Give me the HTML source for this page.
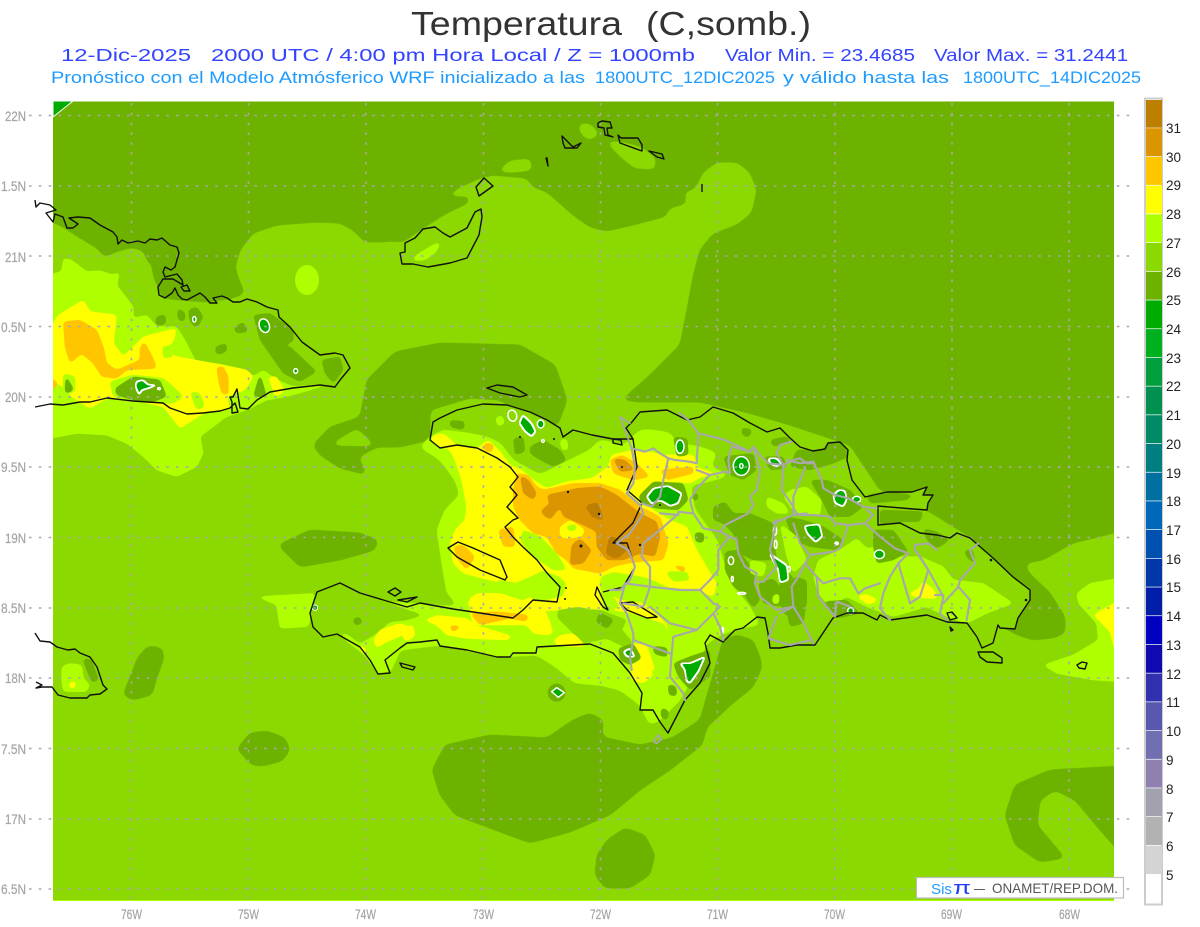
<!DOCTYPE html>
<html><head><meta charset="utf-8"><title>Temperatura</title>
<style>
html,body{margin:0;padding:0;background:#fff;width:1200px;height:927px;overflow:hidden}
svg{display:block}
text{font-family:"Liberation Sans",sans-serif;white-space:pre}
.c26{fill:#6eb200;stroke:#6eb200}.c27{fill:#8bd900;stroke:#8bd900}.c28{fill:#afff00;stroke:#afff00}
.y{fill:#ffff00;stroke:#ffff00}.o{fill:#ffc600;stroke:#ffc600}.b{fill:#db9500;stroke:#db9500}.d{fill:#bd7f00;stroke:#bd7f00}
.c26,.c27,.c28{filter:url(#s1)}
.z polygon{filter:url(#s3)}
.g{fill:#00ab00;stroke:#fff;stroke-width:4.5;stroke-linejoin:round}
.z polygon.g{filter:url(#gs)}
.w{fill:none;stroke:#fff;stroke-width:4.5}
.coast{fill:none;stroke:#111;stroke-width:1.4;stroke-linejoin:round}
.bd{fill:none;stroke:#a8a8a8;stroke-width:6.5;stroke-linejoin:round;stroke-linecap:round}
.gl{font-size:14px;fill:#a6a6a6;stroke:#a6a6a6;stroke-width:.25}
.cl{font-size:13.5px;fill:#222}
</style></head><body>
<svg width="1200" height="927" viewBox="0 0 1200 927" xmlns="http://www.w3.org/2000/svg">
<defs>
<clipPath id="m"><rect x="53" y="101.5" width="1061" height="799.5"/></clipPath>
<filter id="s1" x="-50%" y="-50%" width="200%" height="200%" color-interpolation-filters="sRGB">
<feGaussianBlur stdDeviation="3.5"/>
<feComponentTransfer><feFuncA type="linear" slope="10" intercept="-4.5"/></feComponentTransfer>
</filter>
<filter id="s3" x="-50%" y="-50%" width="200%" height="200%" color-interpolation-filters="sRGB">
<feGaussianBlur stdDeviation="6"/>
<feComponentTransfer><feFuncA type="linear" slope="10" intercept="-4.2"/></feComponentTransfer>
</filter>
<filter id="gs" x="-50%" y="-50%" width="200%" height="200%" color-interpolation-filters="sRGB">
<feGaussianBlur in="SourceAlpha" stdDeviation="5"/>
<feComponentTransfer result="outer"><feFuncA type="linear" slope="12" intercept="-5"/></feComponentTransfer>
<feFlood flood-color="#fff"/><feComposite in2="outer" operator="in" result="wh"/>
<feMorphology in="outer" operator="erode" radius="4.5" result="inner"/>
<feFlood flood-color="#00ab00"/><feComposite in2="inner" operator="in" result="gr"/>
<feMerge><feMergeNode in="wh"/><feMergeNode in="gr"/></feMerge>
</filter>
</defs>
<rect width="1200" height="927" fill="#fff"/>
<g font-size="33" fill="#333">
<text x="411" y="35" textLength="211" lengthAdjust="spacingAndGlyphs">Temperatura</text>
<text x="646" y="35" textLength="165" lengthAdjust="spacingAndGlyphs">(C,somb.)</text>
</g>
<g font-size="17.5" fill="#3344ff">
<text x="61" y="61" textLength="130" lengthAdjust="spacingAndGlyphs">12-Dic-2025</text>
<text x="211" y="61" textLength="484" lengthAdjust="spacingAndGlyphs">2000 UTC / 4:00 pm Hora Local / Z = 1000mb</text>
<text x="725" y="61" textLength="190" lengthAdjust="spacingAndGlyphs">Valor Min. = 23.4685</text>
<text x="934" y="61" textLength="194" lengthAdjust="spacingAndGlyphs">Valor Max. = 31.2441</text>
</g>
<g font-size="16.5" fill="#1e9bff">
<text x="51" y="83" textLength="534" lengthAdjust="spacingAndGlyphs">Pronóstico con el Modelo Atmósferico WRF inicializado a las</text>
<text x="595" y="83" textLength="180" lengthAdjust="spacingAndGlyphs">1800UTC_12DIC2025</text>
<text x="783" y="83" textLength="166" lengthAdjust="spacingAndGlyphs">y válido hasta las</text>
<text x="963" y="83" textLength="178" lengthAdjust="spacingAndGlyphs">1800UTC_14DIC2025</text>
</g>

<g clip-path="url(#m)">
<rect x="53" y="101" width="1061" height="800" fill="#8bd900"/>
<rect x="53" y="900" width="1061" height="1" fill="#afff00"/>
<!-- dark upper sea -->
<polygon class="c26" points="30,80 1140,80 1140,525 1114,533 1073,543 1043,560 1025,563 1028,572 1050,593 1065,617 1065,633 1053,638 1033,640 1015,634 1000,625 975,540 930,512 880,490 850,445 790,425 745,412 700,402 640,402 622,400 650,375 680,345 687,310 693,277 700,250 713,234 737,225 752,213 757,190 750,172 737,162 717,162 703,172 695,188 683,193 687,203 667,209 667,216 633,225 607,231 590,227 573,215 547,192 533,187 527,178 493,175 480,178 460,187 444,197 470,197 468,203 447,213 423,228 403,242 393,241 380,242 365,242 353,230 340,223 317,222 277,225 253,233 240,250 235,267 240,283 245,293 233,298 207,302 180,300 163,298 158,287 153,275 152,263 147,262 145,252 133,247 115,252 105,257 97,248 80,238 63,227 53,222 30,215"/>
<polygon class="c27" points="578,124 590,124 599,134 590,140 582,135"/>
<polygon class="c27" points="606,141 625,143 642,148 655,158 655,169 635,168 620,156"/>
<polygon class="c27" points="498,172 510,161 530,159 532,170 515,172"/>
<!-- dark blobs -->
<polygon class="c26" points="313,445 330,427 360,417 367,380 395,352 440,343 520,345 555,365 567,400 558,425 530,420 500,400 470,398 430,410 430,440 400,447 377,447 358,457 367,475 340,468 320,455"/>
<polygon class="c27" points="330,445 357,429 375,446"/>
<polygon class="c26" points="148,646 162,648 164,658 157,677 152,695 133,700 123,695 130,677 138,657"/>
<polygon class="c26" points="237,749 250,733 267,731 285,738 290,750 282,761 263,766 252,765"/>
<polygon class="c26" points="432,770 445,745 490,735 547,738 573,720 590,713 603,720 602,737 640,745 672,738 700,720 723,640 737,635 753,640 760,657 762,667 753,687 733,703 707,727 702,745 670,770 640,790 610,815 570,832 530,843 495,830 455,815 440,795"/>
<polygon class="c26" points="597,855 607,840 625,828 645,835 655,855 650,875 630,888 605,888 595,875"/>
<polygon class="c26" points="1005,815 1015,785 1050,770 1140,765 1140,875 1100,830 1075,800 1055,790 1040,800 1037,825 1065,858 1040,862 1015,845"/>
<polygon class="c26" points="278,545 310,530 360,533 378,540 375,550 340,560 300,567"/>
<!-- bright patches sea -->
<ellipse cx="307" cy="280" rx="12" ry="15" fill="#afff00"/>
<polygon class="c28" points="410,259 425,250 443,239 436,252 425,260 414,261"/>
<g class="z" transform="translate(0,200) scale(.33333)" stroke-width="1">
<polygon class="c28" points="100,235 185,215 190,175 215,180 260,215 300,212 340,225 360,215 350,255 400,320 400,355 440,345 470,380 530,380 560,430 590,490 650,490 740,510 760,530 790,510 830,540 880,560 1000,550 860,590 800,600 740,630 680,650 600,710 610,760 590,800 530,830 470,810 430,770 380,730 320,705 230,700 100,725"/>
<polygon class="y" points="175,345 250,300 270,335 350,345 340,430 370,470 430,410 530,385 520,425 490,450 530,470 640,490 740,510 760,530 735,570 680,590 690,625 640,635 610,640 540,685 490,620 400,600 320,595 270,625 215,590 190,560 130,530 130,500 130,420"/>
<polygon class="c28" points="487,440 520,435 520,470 490,475"/>
<polygon class="c28" points="760,530 800,520 830,570 770,590"/>
<polygon class="c28" points="570,575 600,580 615,620 590,630"/>
<polygon class="c28" points="330,545 400,525 490,535 520,560 550,590 520,610 400,605 340,590"/>
<polygon class="c28" points="190,520 225,530 225,575 190,585"/>
<polygon class="o" points="190,365 240,360 290,390 310,440 320,490 350,510 420,480 420,445 432,423 460,475 470,505 380,510 350,535 305,530 280,490 245,460 210,490 195,440"/>
<polygon class="o" points="650,500 670,500 685,530 685,585 665,580 655,540"/>
<polygon class="o" points="120,540 170,540 170,565 120,565"/>
<polygon class="y" points="805,530 830,530 855,575 825,590"/>
<polygon class="c26" points="345,565 400,530 480,540 500,590 460,605 400,600 350,585"/>
<polygon class="c26" points="197,525 222,570 195,582"/>
<polygon class="c26" points="468,350 497,343 497,372 468,377"/>
<polygon class="c26" points="533,323 557,340 552,367 533,357"/>
<polygon class="c26" points="565,330 590,320 610,350 590,385 570,365"/>
<polygon class="c26" points="645,440 680,430 680,455 650,465"/>
<polygon class="c26" points="700,385 730,365 745,395 710,400"/>
<polygon class="c26" points="760,345 810,340 880,390 880,425 830,440 870,440 950,515 900,545 850,520 815,470 780,420"/>
<polygon class="c26" points="965,480 1020,470 1030,510 1000,550 975,520"/>
<polygon class="c26" points="760,590 780,520 800,590"/>
<polygon class="g" points="408,545 430,540 445,555 470,555 445,565 425,570 418,585 408,565"/>
<ellipse class="g" cx="793" cy="377" rx="15" ry="21" transform="rotate(-20 793 377)"/>
<ellipse class="w" cx="477" cy="566" rx="4" ry="3"/>
<ellipse class="g" cx="583" cy="358" rx="5" ry="8"/>
<ellipse class="g" cx="887" cy="513" rx="6" ry="7"/>
</g>
<!-- right sea -->
<g class="z" transform="translate(940,500) scale(.33333)" stroke-width="1">
<polygon class="c28" points="620,220 450,250 410,280 415,310 470,370 475,420 400,465 310,495 350,520 460,540 620,550"/>
<polygon class="y" points="620,290 530,305 460,345 510,395 530,470 620,480"/>
</g>
<!-- Jamaica -->
<g class="z" transform="translate(0,600) scale(.33333)" stroke-width="1">
<polygon class="c28" points="185,200 210,190 245,195 250,235 270,255 260,275 190,275 185,240"/>
<polygon class="y" points="203,250 232,243 218,272"/>
<polygon class="c26" points="248,178 272,176 297,240 275,247"/>
<polygon class="c28" points="770,-10 830,15 840,85 925,80 945,-20"/>
</g>
<!-- Hispaniola land -->
<polygon fill="#8bd900" points="433,422 440,418 457,410 483,404 507,405 530,412 547,420 560,428 563,437 573,430 592,435 613,439 626,428 632,422 640,412 667,410 687,420 700,417 713,407 733,413 750,423 767,432 780,428 790,438 800,447 813,451 825,449 828,443 840,442 848,450 847,460 852,480 865,497 887,492 912,492 927,487 923,495 933,495 928,503 927,510 913,509 878,506 878,525 900,523 920,533 937,535 950,538 957,533 970,538 993,558 1013,577 1030,590 1030,600 1018,618 1015,629 1000,628 998,625 993,643 982,648 977,637 967,623 947,622 927,615 890,620 880,615 877,620 863,613 847,613 833,618 815,645 797,645 780,648 770,648 768,633 765,618 757,617 743,628 735,630 723,642 710,635 705,643 710,663 700,683 685,700 668,733 660,722 653,710 640,710 642,693 630,673 613,653 590,644 537,647 536,653 513,653 510,657 497,657 467,650 440,646 437,640 420,642 407,643 400,648 385,660 390,673 378,674 370,660 360,647 337,634 323,637 313,627 310,613 317,592 340,583 360,593 390,602 407,607 420,603 453,609 480,613 513,618 523,610 533,600 557,602 560,587 547,573 537,560 523,547 513,537 505,527 513,520 518,518 507,507 517,495 510,487 518,477 510,467 497,458 477,448 457,445 440,448 430,440"/>
<!-- big c28 -->
<polygon class="c28" points="420,447 430,437 443,430 467,433 487,437 500,443 513,460 540,475 570,460 590,450 600,440 625,445 640,430 653,430 670,433 677,443 700,447 717,453 710,467 730,475 707,482 690,485 695,510 717,540 723,560 733,587 750,607 760,625 740,628 720,635 705,645 700,665 680,700 660,720 650,725 640,705 620,690 600,685 575,683 557,668 537,655 497,657 440,645 400,650 390,673 378,674 365,655 345,640 340,625 355,610 365,595 390,602 420,604 460,607 447,593 443,570 440,550 437,530 445,510 460,495 455,480 440,460"/>
<!-- peninsula patches -->
<g class="z" transform="translate(280,550) scale(.33333)" stroke-width="1">
<polygon class="c27" points="110,130 180,110 250,135 330,160 380,180 430,195 380,210 330,215 290,250 240,280 200,250 140,260 105,230 95,190"/>
<polygon class="c26" points="218,206 242,201 247,220 225,227"/>
<polygon class="c27" points="840,170 900,170 950,190 1010,220 1060,280 1030,290 980,265 910,280 870,240 830,200"/>
<polygon class="c26" points="943,193 972,203 977,227 950,222"/>
<polygon class="y" points="280,270 300,240 360,220 400,235 380,250 310,280 290,295"/>
<polygon class="y" points="430,210 480,195 500,220 580,225 620,235 700,260 680,270 560,265 500,255 470,225"/>
<polygon class="y" points="570,140 640,130 700,170 750,140 800,190 820,250 800,255 760,250 740,225 640,225 580,225 570,190"/>
<polygon class="y" points="820,270 860,250 900,285 830,285"/>
<polygon class="y" points="240,280 260,300 255,320 240,295"/>
</g>
<g transform="translate(280,550) scale(.33333)">
<circle cx="830" cy="428" r="27" fill="#6eb200"/>
<polygon class="g" points="815,425 830,413 853,428 835,442"/>
<circle cx="105" cy="173" r="8" fill="#00ab00" stroke="#fff" stroke-width="3"/>
</g>
<!-- Haiti yellow etc -->
<g class="z" transform="translate(400,380) scale(.33333)" stroke-width="1">
<polygon class="c26" points="390,200 430,180 480,210 500,240 460,260 420,240 390,220"/>
<polygon class="c26" points="150,120 195,125 190,150 150,140"/>
<polygon class="c26" points="340,175 370,170 375,215 345,225"/>
<polygon class="c28" points="285,115 305,105 315,130 295,140"/>
<polygon class="c28" points="480,180 500,175 505,210 485,210"/>
<polygon class="y" points="105,165 90,175 110,195 150,210 165,240 185,300 200,380 195,420 165,450 150,490 160,550 190,580 250,595 330,615 400,585 430,570 480,590 500,610 490,650 420,665 360,660 300,640 230,640 200,670 235,705 290,720 380,700 470,690 530,680 610,690 600,620 600,590 640,575 730,590 760,600 800,620 890,630 940,650 950,610 925,570 890,510 860,440 810,420 735,375 730,345 770,310 830,305 870,310 905,290 950,280 895,265 880,225 790,225 745,215 700,210 635,225 625,260 575,295 500,305 440,325 400,300 365,270 330,255 300,215 265,180 230,205 170,195 130,160"/>
<polygon class="y" points="620,640 660,660 730,670 800,730 820,790 790,730 700,700 640,690"/>
<polygon class="y" points="465,770 520,760 560,800 500,800"/>
<polygon class="y" points="690,790 740,795 765,870 720,890 700,840"/>
<polygon class="y" points="100,705 200,715 240,745 180,770 110,740"/>
<polygon class="y" points="0,745 40,735 45,770 15,785"/>
<polygon class="c28" points="370,450 420,470 470,520 500,570 460,570 400,530 360,480"/>
<polygon class="c28" points="290,600 360,610 330,625 290,620"/>
<polygon class="c28" points="795,575 860,575 870,600 820,605"/>
<polygon class="c27" points="520,690 600,690 680,720 660,760 590,760 530,740"/>
<polygon class="c26" points="598,698 642,718 622,747 588,725"/>
<polygon class="c28" points="595,640 625,630 660,680 630,690"/>
<polygon class="o" points="350,280 385,285 410,320 430,330 520,310 600,310 660,330 720,380 780,410 805,490 790,540 720,545 680,550 640,560 600,580 520,565 500,540 470,520 440,470 400,460 360,420 340,380 340,330"/>
<polygon class="o" points="295,450 340,440 345,500 310,500"/>
<polygon class="o" points="630,240 665,225 710,250 750,290 700,300 640,280"/>
<polygon class="o" points="780,270 880,260 880,280 800,300"/>
<polygon class="o" points="160,500 190,495 225,530 200,570 175,540"/>
<polygon class="o" points="210,700 290,695 385,705 380,725 330,715 240,735"/>
<polygon class="o" points="253,188 282,193 277,217 253,212"/>
<polygon class="o" points="810,552 860,562 850,578"/>
<polygon class="o" points="145,738 187,736 160,757"/>
<polygon class="b" points="440,345 490,335 530,325 600,320 650,345 720,400 770,425 780,470 765,530 720,520 670,540 620,540 590,500 590,455 540,430 490,410 480,380 450,420 420,395 450,370"/>
<polygon class="b" points="360,285 385,300 410,340 400,360 370,340"/>
<polygon class="b" points="515,495 540,475 575,510 550,550 510,555"/>
<polygon class="b" points="640,235 675,240 705,270 660,275"/>
<polygon class="d" points="555,378 592,366 612,422 578,412"/>
<polygon class="d" points="628,468 662,478 682,510 650,537 618,522"/>
<polygon class="d" points="528,488 552,493 545,507"/>
<polygon class="y" points="480,440 510,420 555,450 545,470 500,475 480,470"/>
<polygon class="c28" points="498,438 532,433 527,452 503,452"/>
<!-- N Haiti greens -->
<ellipse class="w" cx="337" cy="107" rx="13" ry="17" transform="rotate(-15 337 107)" style="fill:#8bd900"/>
<polygon class="g" points="368,105 380,115 395,130 407,155 395,170 375,155 358,130"/>
<ellipse class="g" cx="422" cy="132" rx="10" ry="12"/>
<ellipse class="w" cx="429" cy="183" rx="4" ry="4"/>
</g>
<!-- DR interior (zoom 7) -->
<g class="z" transform="translate(780,400) scale(.33333)" stroke-width="1">
<polygon class="c28" points="115,480 180,450 230,415 260,445 300,440 350,470 420,470 490,500 520,540 610,550 700,610 620,640 560,670 500,650 440,620 340,650 260,620 200,590 150,620 115,580 100,530"/>
<polygon class="c28" points="30,270 80,260 125,300 120,345 50,345 10,290"/>
<polygon class="y" points="228,588 260,583 297,600 265,614"/>
<polygon class="y" points="383,580 415,568 430,543 467,575 472,597 410,592"/>
<polygon class="c26" points="90,240 140,240 210,270 250,320 210,350 150,350 120,290"/>
<polygon class="c26" points="15,350 70,360 130,380 190,420 170,450 90,440 40,420"/>
<polygon class="c26" points="280,390 340,390 385,455 340,480 290,490 280,440"/>
<polygon class="c26" points="260,285 320,275 400,285 380,300 270,310"/>
<polygon class="c26" points="300,330 430,335 420,365 370,365 300,375"/>
<polygon class="c26" points="430,385 470,395 510,420 470,445 440,420"/>
<polygon class="c26" points="551,453 577,448 587,492 565,477"/>
<polygon class="c26" points="0,530 30,520 80,600 70,670 10,640 0,600"/>
<polygon class="c26" points="130,605 200,600 240,640 170,655"/>
<polygon class="c26" points="50,150 130,150 145,125 190,130 205,170 160,190 90,210 30,200"/>
<polygon class="g" points="160,285 175,270 195,272 200,300 190,320 165,310"/>
<ellipse class="g" cx="230" cy="298" rx="12" ry="9"/>
<polygon class="g" points="73,378 118,373 127,410 107,427 82,402"/>
<ellipse class="w" cx="170" cy="430" rx="5" ry="4" style="fill:#fff"/>
<ellipse class="g" cx="298" cy="463" rx="15" ry="13"/>
<circle class="g" cx="212" cy="632" r="9"/>
</g>
<!-- DR interior (zoom 11) -->
<g class="z" transform="translate(610,400) scale(.33333)" stroke-width="1">
<polygon class="c26" points="345,455 385,450 430,510 435,550 450,600 430,625 400,580 370,560 345,510"/>
<polygon class="c26" points="310,320 345,305 370,340 420,340 490,370 490,410 500,480 430,480 390,460 370,400 340,370 310,360"/>
<polygon class="c26" points="550,530 590,540 590,620 550,610"/>
<polygon class="c26" points="530,630 580,635 580,670 540,680"/>
<polygon class="c26" points="445,550 490,535 540,600 510,620 460,610"/>
<polygon class="c28" points="470,290 520,310 540,340 500,340 470,320"/>
<polygon class="c28" points="510,370 560,410 590,480 550,520 530,470"/>
<polygon class="c28" points="420,480 470,490 460,530 420,520"/>
<polygon class="c28" points="488,588 507,578 507,612 488,612"/>
<polygon class="c26" points="393,83 427,88 417,112 398,107"/>
<polygon class="c26" points="480,120 530,110 545,125 490,140"/>
<polygon class="c26" points="248,278 267,283 262,302 248,302"/>
<polygon class="c26" points="253,398 282,398 282,427 258,427"/>
<polygon class="c26" points="190,110 232,115 235,165 200,170"/>
<polygon class="c26" points="340,170 430,160 440,210 400,240 360,225"/>
<polygon class="c26" points="460,170 520,170 530,205 480,210"/>
<polygon class="c26" points="85,290 130,245 220,250 235,300 205,330 140,325 100,315"/>
<polygon class="c26" points="25,745 70,730 95,775 60,795 30,780"/>
<polygon class="c26" points="190,790 240,770 300,750 300,830 240,870 205,830"/>
<polygon class="c26" points="128,738 172,743 172,772 133,762"/>
<polygon class="c26" points="173,853 197,858 202,887 178,887"/>
<polygon class="c26" points="153,923 177,933 172,962 153,952"/>
<polygon class="y" points="60,790 115,795 130,825 100,850 65,840"/>
<ellipse class="g" cx="210" cy="140" rx="12" ry="20"/>
<polygon class="g" points="110,290 130,265 175,258 215,280 205,310 180,318 150,300 125,312"/>
<ellipse class="g" cx="394" cy="198" rx="24" ry="28"/>
<ellipse class="w" cx="394" cy="198" rx="5" ry="7"/>
<polygon class="g" points="475,175 500,175 515,190 500,200 480,190"/>
<polygon class="g" points="478,460 530,495 535,540 510,548 505,510"/>
<ellipse class="w" cx="537" cy="507" rx="4" ry="8"/>
<ellipse class="w" cx="363" cy="482" rx="8" ry="12"/>
<ellipse class="w" cx="367" cy="537" rx="3" ry="8"/>
<ellipse class="w" cx="395" cy="580" rx="12" ry="3"/>
<ellipse class="w" cx="495" cy="393" rx="5" ry="12"/>
<ellipse class="w" cx="497" cy="433" rx="4" ry="12"/>
<ellipse class="w" cx="338" cy="690" rx="2" ry="8"/>
<polygon class="g" points="210,790 240,790 285,770 265,815 240,850 230,845 225,810"/>
<polygon class="g" points="40,755 60,745 75,770 50,770"/>
</g>
<polygon points="53,101 73,101 53,117" fill="#00ab00" stroke="#fff" stroke-width="1"/>
</g>

<!-- grid -->
<g fill="none" stroke="#a8a8a8" stroke-width="1.6" stroke-dasharray="2.6 7.2">
<path d="M29 115.5H1134M29 186H1134M29 256H1134M29 326.5H1134M29 397H1134M29 467H1134M29 537.5H1134M29 608H1134M29 678H1134M29 748.5H1134M29 819H1134M29 889H1134"/>
<path d="M131.5 103V905M248.5 103V905M366 103V905M483.5 103V905M600.5 103V905M717.5 103V905M835 103V905M952 103V905M1069 103V905"/>
</g>

<!-- coast -->
<g class="coast">
<polyline points="35,200 36,207 40,203 50,205 56,210 46,213 53,222 55,214 63,217 67,228 73,228 78,224 69,218 78,217 90,218 100,225 113,232 117,237 118,244 122,240 128,243 138,241 145,243 150,239 157,240 162,238 170,245 177,247 179,253 175,267 171,270 165,267 163,272 165,277 177,274 182,280 183,285 173,279 163,279 158,287 159,295 165,298 172,293 175,288 178,295 182,299 187,300 200,293 205,297 210,303 217,303 213,298 222,296 227,298 233,302 240,302 247,299 257,302 267,307 278,310 279,317 290,327 302,342 320,355 335,353 343,355 350,368 340,380 335,387 320,385 293,388 270,392 257,400 248,409 240,408 237,389 233,397 230,397 232,402 232,413 238,412 235,403 230,408 220,411 203,413 187,414 170,408 163,403 133,401 107,398 90,402 80,402 63,405 50,404 35,407"/>
<polygon points="181,287 187,285 190,291 184,291"/>
<polygon points="402,264 400,253 405,252 405,243 415,238 423,229 435,227 443,233 450,237 467,228 470,222 475,212 481,209 482,217 479,235 467,258 450,263 428,267 413,264"/>
<polygon points="476,187 484,178 493,186 479,196"/>
<polygon points="547,158 548,166 546,158"/>
<polygon points="562,136 573,147 581,143 577,148 565,148 563,143"/>
<polygon points="598,123 602,121 610,122 612,128 607,128 608,135 613,137 605,135 604,128 598,127"/>
<polygon points="618,135 621,138 638,138 642,145 642,151 620,143"/>
<polygon points="649,151 662,154 664,159 657,157"/>
<polyline points="702,184 702,192"/>
<polygon points="487,388 497,385 513,387 527,395 520,397 500,393"/>
<polygon points="433,422 440,418 457,410 483,404 507,405 530,412 547,420 560,428 563,437 573,430 592,435 613,439 633,439 626,428 632,422 640,412 667,410 687,420 700,417 713,407 733,413 750,423 767,432 780,428 790,438 800,447 813,451 825,449 828,443 840,442 848,450 847,460 852,480 865,497 887,492 912,492 927,487 923,495 933,495 928,503 927,510 913,509 878,506 878,525 900,523 920,533 937,535 950,538 957,533 970,538 993,558 1013,577 1030,590 1030,600 1018,618 1015,629 1000,628 998,625 993,643 982,648 977,637 967,623 947,622 927,615 890,620 880,615 877,620 863,613 847,613 833,618 815,645 797,645 780,648 770,648 768,633 765,618 757,617 743,628 735,630 723,642 710,635 705,643 710,663 700,683 685,700 668,733 660,722 653,710 640,710 642,693 630,673 613,653 590,644 537,647 536,653 513,653 510,657 497,657 467,650 440,646 437,640 420,642 407,643 400,648 385,660 390,673 378,674 370,660 360,647 337,634 323,637 313,627 310,613 317,592 340,583 360,593 390,602 407,607 420,603 453,609 480,613 513,618 523,610 533,600 557,602 560,587 547,573 537,560 523,547 513,537 505,527 513,520 518,518 507,507 517,495 510,487 518,477 510,467 497,458 477,448 457,445 440,448 430,440"/>
<polyline points="633,439 637,467 627,490 642,503 633,523 613,543 627,543 635,567 623,587 603,592"/>
<polygon points="613,443 622,445 621,440 613,439"/>
<polygon points="448,548 458,542 473,548 500,560 507,577 505,580 480,570 457,557"/>
<polygon points="597,587 608,610 603,607 595,595"/>
<polygon points="620,603 633,602 657,617 647,618 627,610"/>
<polygon points="978,652 993,652 1002,658 1002,663 987,662 980,657"/>
<polygon points="947,613 952,612 957,618 950,620"/>
<polygon points="950,627 953,630 951,631"/>
<polygon points="1077,665 1082,662 1087,663 1085,669 1079,668"/>
<polygon points="400,663 415,667 413,670 402,667"/>
<polygon points="388,592 395,588 401,592 395,596"/>
<polygon points="398,600 417,597 407,602"/>
<polyline points="35,633 40,641 50,642 57,647 68,650 75,649 80,653 90,657 97,667 103,685 107,689 100,694 90,695 87,698 70,698 58,695 52,687 42,687 36,688 42,685 36,682"/>
</g>
<g fill="#111">
<circle cx="568" cy="492" r="1.2"/><circle cx="599" cy="514" r="1.2"/><circle cx="581" cy="546" r="1.5"/><circle cx="640" cy="545" r="1.2"/><circle cx="622" cy="467" r="1"/><circle cx="660" cy="505" r="1"/><circle cx="991" cy="560" r="1.3"/><circle cx="1026" cy="600" r="1.3"/><circle cx="565" cy="599" r="1"/><circle cx="566" cy="588" r="1"/><circle cx="520" cy="437" r="1"/><circle cx="554" cy="439" r="1"/>
</g>

<!-- provincial borders -->
<g class="bd" transform="translate(610,400) scale(.33333)">
<polyline points="65,145 105,155 130,145 150,160 175,175 195,180 240,185 260,190 265,100 240,65 210,40"/>
<polyline points="175,175 160,240 150,290 125,320 95,310"/>
<polyline points="260,210 300,225 345,215 360,220 355,180 365,140 420,155 430,140 450,165 475,190 520,195 550,180 570,175 590,190 610,190"/>
<polyline points="265,100 345,120 420,155"/>
<polyline points="545,125 510,135 500,160 520,195 515,270 550,320 550,345 590,340"/>
<polyline points="430,140 450,210 440,270 420,290 430,315 415,340 345,375 330,395 280,385 250,340 240,300 260,265 300,225"/>
<polyline points="150,340 205,345 205,335 245,340"/>
<polyline points="330,395 360,410 325,450 325,510 300,540 270,570 210,570 120,560 45,550"/>
<polyline points="360,410 380,420 385,460 405,500 440,520 435,550 450,590 500,630 550,620"/>
<polyline points="605,720 540,735 475,715 500,650"/>
<polyline points="490,370 500,360 480,450 500,500 460,545 435,545"/>
<polyline points="490,370 550,345"/>
<polyline points="95,470 120,500 120,560 100,620 40,610"/>
<polyline points="95,470 100,430 150,390 190,355 205,340"/>
<polyline points="270,570 310,610 330,620 310,640 260,690 180,670 120,620"/>
<polyline points="260,690 190,710 185,760 180,830 220,880 225,900"/>
<polyline points="70,720 60,770 65,810"/>
<polyline points="70,720 180,760"/>
<polyline points="310,640 330,680 340,720"/>
<polyline points="65,145 75,200 70,250 50,280 90,315 100,340 60,400 20,430 55,450 75,500 60,540 30,570 0,570"/>
<polyline points="45,550 30,610 50,640 70,700 70,720"/>
<polyline points="130,1025 145,1005 155,1018 140,1030 130,1025" style="stroke-width:5"/>
<polyline points="65,145 30,50 60,70" style="stroke-width:5"/>
</g>
<g class="bd" transform="translate(780,400) scale(.33333)">
<polyline points="100,185 125,240 130,265 165,285 205,295 250,320 290,325"/>
<polyline points="75,205 40,290 40,325 55,345 100,345 150,350 165,370 205,375 255,370 280,345 260,330"/>
<polyline points="255,370 300,410 345,445 385,460 355,490 330,530 310,580 300,625 330,660"/>
<polyline points="205,375 180,445 160,455 90,465 75,490 110,530 130,550 180,535 210,535 235,580 255,565 300,550"/>
<polyline points="40,370 60,430 90,465"/>
<polyline points="355,490 390,610 420,590 445,510 420,470 405,450 405,435 445,430 470,450"/>
<polyline points="405,450 445,510 490,590 480,640 500,660"/>
<polyline points="595,430 570,450 585,490 540,540 535,560 490,610"/>
<polyline points="535,560 570,600 560,660"/>
<polyline points="75,490 55,530 35,560 40,620 65,660 100,730"/>
<polyline points="110,530 115,590 140,620 165,650 170,605 210,620"/>
<polyline points="465,585 490,585"/>
<polyline points="0,640 40,620"/>
<polyline points="20,180 60,190 100,185"/>
</g>

<!-- labels -->
<g class="gl">
<text x="5" y="121" textLength="21" lengthAdjust="spacingAndGlyphs">22N</text>
<text x="1" y="191" textLength="25" lengthAdjust="spacingAndGlyphs">1.5N</text>
<text x="5" y="262" textLength="21" lengthAdjust="spacingAndGlyphs">21N</text>
<text x="1" y="332" textLength="25" lengthAdjust="spacingAndGlyphs">0.5N</text>
<text x="5" y="402" textLength="21" lengthAdjust="spacingAndGlyphs">20N</text>
<text x="1" y="472" textLength="25" lengthAdjust="spacingAndGlyphs">9.5N</text>
<text x="5" y="543" textLength="21" lengthAdjust="spacingAndGlyphs">19N</text>
<text x="1" y="613" textLength="25" lengthAdjust="spacingAndGlyphs">8.5N</text>
<text x="5" y="683" textLength="21" lengthAdjust="spacingAndGlyphs">18N</text>
<text x="1" y="754" textLength="25" lengthAdjust="spacingAndGlyphs">7.5N</text>
<text x="5" y="824" textLength="21" lengthAdjust="spacingAndGlyphs">17N</text>
<text x="1" y="894" textLength="25" lengthAdjust="spacingAndGlyphs">6.5N</text>
<text x="121" y="919" textLength="21" lengthAdjust="spacingAndGlyphs">76W</text>
<text x="238" y="919" textLength="21" lengthAdjust="spacingAndGlyphs">75W</text>
<text x="355" y="919" textLength="21" lengthAdjust="spacingAndGlyphs">74W</text>
<text x="473" y="919" textLength="21" lengthAdjust="spacingAndGlyphs">73W</text>
<text x="590" y="919" textLength="21" lengthAdjust="spacingAndGlyphs">72W</text>
<text x="707" y="919" textLength="21" lengthAdjust="spacingAndGlyphs">71W</text>
<text x="824" y="919" textLength="21" lengthAdjust="spacingAndGlyphs">70W</text>
<text x="941" y="919" textLength="21" lengthAdjust="spacingAndGlyphs">69W</text>
<text x="1059" y="919" textLength="21" lengthAdjust="spacingAndGlyphs">68W</text>
</g>

<!-- logo box -->
<rect x="916.5" y="877.5" width="207" height="20.5" fill="#fff" stroke="#bdbdbd" stroke-width="1.2"/>
<text x="931" y="894" font-size="15" fill="#1e9bff" textLength="21" lengthAdjust="spacingAndGlyphs">Sis</text>
<text x="953" y="894" font-size="18" fill="#2040ff" textLength="18" lengthAdjust="spacingAndGlyphs">π</text>
<text x="974" y="893" font-size="14" fill="#555" textLength="11" lengthAdjust="spacingAndGlyphs">–</text>
<text x="992" y="893" font-size="14" fill="#555" textLength="126" lengthAdjust="spacingAndGlyphs">ONAMET/REP.DOM.</text>

<!-- colorbar -->
<rect x="1145" y="98.5" width="17" height="806" fill="#fff" stroke="#ccc" stroke-width="2"/>
<g>
<rect x="1146" y="100" width="16" height="27.7" fill="#bd7f00"/>
<rect x="1146" y="128.2" width="16" height="28" fill="#db9500"/>
<rect x="1146" y="156.9" width="16" height="28" fill="#ffc600"/>
<rect x="1146" y="185.6" width="16" height="28" fill="#ffff00"/>
<rect x="1146" y="214.3" width="16" height="28" fill="#afff00"/>
<rect x="1146" y="243" width="16" height="28" fill="#8bd900"/>
<rect x="1146" y="271.7" width="16" height="28" fill="#6eb200"/>
<rect x="1146" y="300.4" width="16" height="28" fill="#00ab00"/>
<rect x="1146" y="329.1" width="16" height="28" fill="#00b01e"/>
<rect x="1146" y="357.8" width="16" height="28" fill="#009e3c"/>
<rect x="1146" y="386.5" width="16" height="28" fill="#009150"/>
<rect x="1146" y="415.2" width="16" height="28" fill="#008a66"/>
<rect x="1146" y="443.9" width="16" height="28" fill="#007f80"/>
<rect x="1146" y="472.6" width="16" height="28" fill="#0070a0"/>
<rect x="1146" y="501.3" width="16" height="28" fill="#0068b8"/>
<rect x="1146" y="530" width="16" height="28" fill="#0050b0"/>
<rect x="1146" y="558.7" width="16" height="28" fill="#0038a8"/>
<rect x="1146" y="587.4" width="16" height="28" fill="#001ea8"/>
<rect x="1146" y="616.1" width="16" height="28" fill="#0000c0"/>
<rect x="1146" y="644.8" width="16" height="28" fill="#1008b0"/>
<rect x="1146" y="673.5" width="16" height="28" fill="#3030b0"/>
<rect x="1146" y="702.2" width="16" height="28" fill="#5858b0"/>
<rect x="1146" y="730.9" width="16" height="28" fill="#7070b0"/>
<rect x="1146" y="759.6" width="16" height="28" fill="#9080b0"/>
<rect x="1146" y="788.3" width="16" height="28" fill="#a2a2ae"/>
<rect x="1146" y="817" width="16" height="28" fill="#b2b2b2"/>
<rect x="1146" y="845.7" width="16" height="28.4" fill="#d4d4d4"/>
</g>
<g class="cl">
<text x="1166" y="133">31</text><text x="1166" y="162">30</text><text x="1166" y="190">29</text><text x="1166" y="219">28</text><text x="1166" y="248">27</text><text x="1166" y="277">26</text><text x="1166" y="305">25</text><text x="1166" y="334">24</text><text x="1166" y="363">23</text><text x="1166" y="391">22</text><text x="1166" y="420">21</text><text x="1166" y="449">20</text><text x="1166" y="478">19</text><text x="1166" y="506">18</text><text x="1166" y="535">17</text><text x="1166" y="564">16</text><text x="1166" y="592">15</text><text x="1166" y="621">14</text><text x="1166" y="650">13</text><text x="1166" y="679">12</text><text x="1166" y="707">11</text><text x="1166" y="736">10</text><text x="1166" y="765">9</text><text x="1166" y="794">8</text><text x="1166" y="822">7</text><text x="1166" y="851">6</text><text x="1166" y="880">5</text>
</g>
</svg>
</body></html>
